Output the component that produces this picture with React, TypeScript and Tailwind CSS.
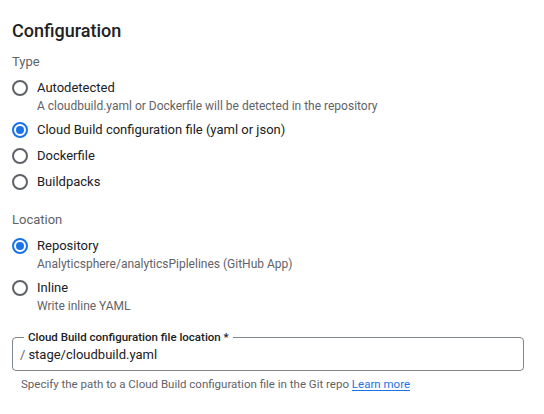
import React, { useState } from 'react';

type Opt = { id: string; label: string; sub?: string };

const typeOpts: Opt[] = [
  { id: 'auto', label: 'Autodetected', sub: 'A cloudbuild.yaml or Dockerfile will be detected in the repository' },
  { id: 'cloudbuild', label: 'Cloud Build configuration file (yaml or json)' },
  { id: 'dockerfile', label: 'Dockerfile' },
  { id: 'buildpacks', label: 'Buildpacks' },
];

const locationOpts: Opt[] = [
  { id: 'repo', label: 'Repository', sub: 'Analyticsphere/analyticsPiplelines (GitHub App)' },
  { id: 'inline', label: 'Inline', sub: 'Write inline YAML' },
];

function Radio({ opt, checked, onSelect }: { opt: Opt; checked: boolean; onSelect: () => void }) {
  return (
    <button type="button" onClick={onSelect} className="flex items-start gap-[9px] text-left">
      <span
        className={
          checked
            ? 'mt-[2px] flex h-4 w-4 shrink-0 items-center justify-center rounded-full border-2 border-[#1a73e8]'
            : 'mt-[2px] flex h-4 w-4 shrink-0 items-center justify-center rounded-full border-2 border-[#5f6368]'
        }
      >
        {checked && <span className="h-2 w-2 rounded-full bg-[#1a73e8]" />}
      </span>
      <span className="flex flex-col">
        <span className="text-[13px] leading-5 text-[#202124]">{opt.label}</span>
        {opt.sub && <span className="text-xs leading-4 text-[#5f6368]">{opt.sub}</span>}
      </span>
    </button>
  );
}

export default function App() {
  const [type, setType] = useState('cloudbuild');
  const [loc, setLoc] = useState('repo');
  const [path, setPath] = useState('stage/cloudbuild.yaml');

  return (
    <div className="min-h-screen bg-white px-3 pt-[19px] font-['Roboto',_'Liberation_Sans',_sans-serif]">
      <h2 className="text-lg font-medium leading-6 text-[#202124]">Configuration</h2>

      <div className="mt-[9px] text-[13px] leading-5 text-[#5f6368]">Type</div>
      <div className="mt-[6px] flex flex-col gap-[6px]">
        {typeOpts.map((o) => (
          <Radio key={o.id} opt={o} checked={type === o.id} onSelect={() => setType(o.id)} />
        ))}
      </div>

      <div className="mt-[18px] text-[13px] leading-5 text-[#5f6368]">Location</div>
      <div className="mt-[6px] flex flex-col gap-[6px]">
        {locationOpts.map((o) => (
          <Radio key={o.id} opt={o} checked={loc === o.id} onSelect={() => setLoc(o.id)} />
        ))}
      </div>

      {/* file location field */}
      <div className="relative mt-[23px] mr-[8px]">
        <label className="absolute -top-[8px] left-[12px] bg-white px-1 text-[11.5px] font-medium leading-4 text-[#202124]">
          Cloud Build configuration file location *
        </label>
        <div className="flex h-[34px] items-center rounded border border-[#80868b] pl-[7px] pt-[1px]">
          <span className="mr-[3px] text-[13px] text-[#5f6368]">/</span>
          <input
            value={path}
            onChange={(e) => setPath(e.target.value)}
            className="flex-1 bg-transparent text-[13px] text-[#202124] outline-none"
          />
        </div>
      </div>
      <p className="mt-[5px] pl-[9px] text-[11.5px] leading-4 text-[#5f6368]">
        Specify the path to a Cloud Build configuration file in the Git repo{' '}
        <a href="#" className="text-[#1a73e8] underline underline-offset-2">Learn more</a>
      </p>
    </div>
  );
}
